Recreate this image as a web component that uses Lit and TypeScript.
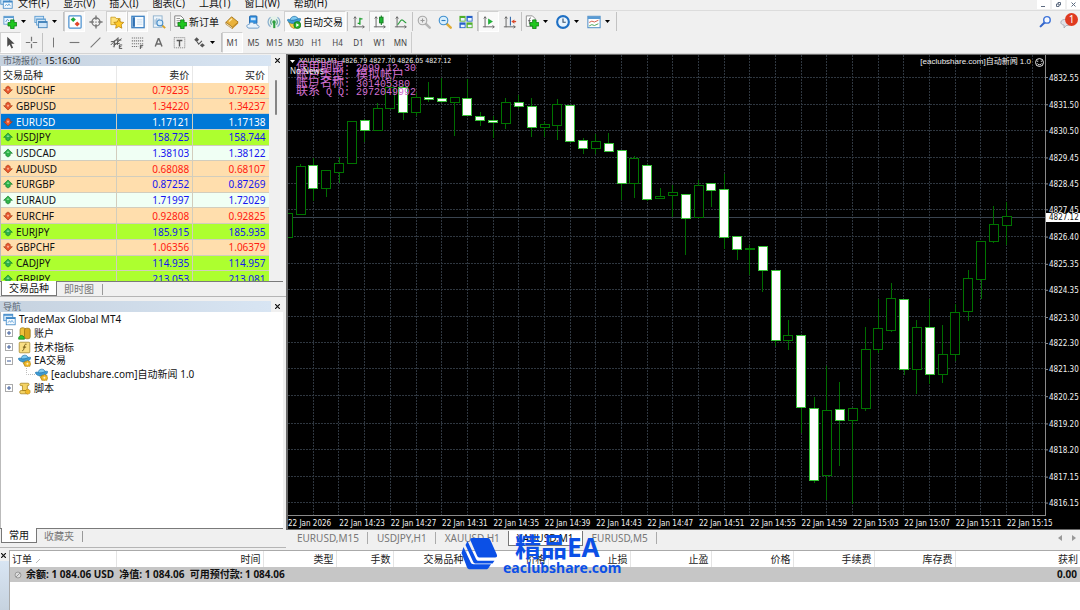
import { LitElement, html, svg, css, nothing } from "lit";
import { customElement } from "lit/decorators.js";
import { classMap } from "lit/directives/class-map.js";

/* ---------- icons (16 x 16 grid) ---------- */

const plus = svg`<path d="M9 7h4v3h3v4h-3v3h-4v-3H6v-4h3z" fill="#1fc61f" stroke="#0b7a12" stroke-width=".9" transform="translate(-.3 -1.4)"/>`;
const axes = svg`<path d="M3.5 2v12M1 13.5h13M2 4l1.5-2L5 4M12 12l2 1.5-2 1.5" fill="none" stroke="#666" stroke-width="1.1"/>`;
const hat = svg`
  <path d="M3.500 6.500c0-6 8.500-7 9.500-1z" fill="#7cc9f0" stroke="#1d6fa8" stroke-width=".8"/>
  <path d="M.4 5.500C2 3.800 4 6.800 7.500 6.200 11 5.600 13.500 3 15.600 4.200 15.500 8 11 9.800 7 9.800 3.500 9.700.8 8.200.4 5.500z" fill="#3d9bd3" stroke="#1d6fa8" stroke-width=".7"/>`;
const windows = svg`
  <rect x="1" y="1.500" width="11" height="8" fill="#d7ebfb" stroke="#3d86c6"/><path d="M1 2.500h11" stroke="#3d86c6" stroke-width="1.600"/>
  <rect x="4" y="5.500" width="11" height="9" fill="#f4faff" stroke="#3d86c6"/><path d="M4 6.500h11" stroke="#3d86c6" stroke-width="1.800"/>
  <path d="M6 12l2-2.500 1.500 2 1.500-2.500 2 3" fill="none" stroke="#5c9fd6"/>`;
const lens = (rim: string, glass: string, handle: string) => svg`
  <path d="M9.500 9.500l5 5" stroke="${handle}" stroke-width="2.800" stroke-linecap="round"/>
  <circle cx="6.300" cy="6.300" r="4.900" fill="${glass}" stroke="${rim}" stroke-width="1.300"/>`;

const ICONS: Record<string, unknown> = {
  app: windows,
  newChart: svg`<rect x="1" y="1.500" width="11" height="9" fill="#eaf5ff" stroke="#5b9bd0"/><path d="M1 2.500h11" stroke="#5b9bd0" stroke-width="1.800"/><path d="M3 8l2-3 2 2" fill="none" stroke="#4e8dc4"/>${plus}`,
  profiles: svg`<rect x="1" y="1.500" width="10" height="7" fill="#cfe5f8" stroke="#5b9bd0"/><rect x="3" y="4.500" width="10" height="7" fill="#e2f0fc" stroke="#5b9bd0"/><path d="M3 5.300h10" stroke="#5b9bd0"/><rect x="5" y="7.500" width="10" height="7" fill="#cfe5f8" stroke="#3d7fb8"/><path d="M5 8.300h10" stroke="#3d7fb8" stroke-width="1.500"/>`,
  quotes: svg`<rect x="1" y="1" width="14" height="14" rx="1" fill="#fff" stroke="#4a90cf" stroke-width="1.400"/><path d="M6 2.500l3 2.700-3 2.700-3-2.700z" fill="#1fa83a"/><path d="M10.500 7.500l3 2.800-3 2.700-3-2.700z" fill="#e2452a"/>`,
  target: svg`<circle cx="8" cy="8" r="4.600" fill="none" stroke="#777" stroke-width="1.500"/><path d="M8 .5v5M8 10.500v5M.5 8h5M10.500 8h5" stroke="#777" stroke-width="1.600"/><circle cx="8" cy="8" r="1" fill="#999"/>`,
  navigator: svg`<path d="M1 2.500h5l1 1.500h4.500V11H1z" fill="#ffe27a" stroke="#c79a1c" stroke-width=".9"/><path d="M10 4.500l1.800 3.500 3.900.5-2.900 2.700.7 3.900-3.500-1.900-3.500 1.900.7-3.900-2.900-2.700 3.900-.5z" fill="#ffc928" stroke="#b9830a" stroke-width=".9"/>`,
  dataWindow: svg`<rect x="1" y="1.500" width="14" height="13" fill="#f6fbff" stroke="#3f83c4" stroke-width="1.500"/><rect x="2" y="2.500" width="2.500" height="11" fill="#2d6fb3"/><path d="M7 5.500h6M7 8h6M7 10.500h6" stroke="#c3d8eb"/>`,
  tester: svg`<rect x="1.500" y="1" width="10" height="13" fill="#eef5fb" stroke="#8aaecb"/><path d="M3.500 11V5M5.500 11V3.500M8 7V4" stroke="#7fa6c8"/><path d="M11.500 11.500l3.500 3.500" stroke="#d9a227" stroke-width="2.200"/><circle cx="9" cy="9" r="3.400" fill="#d6ecfb" stroke="#4c8fc9" stroke-width="1.200"/>`,
  newOrder: svg`<path d="M2 1h7l3 3v9H2z" fill="#fdfdfd" stroke="#777"/><path d="M4 4h4M4 6.500h5M4 9h3" stroke="#888"/>${plus}`,
  editor: svg`<path d="M1 8.500L7.500 2 15 8l-6.500 6z" fill="#e9b23c" stroke="#9a6a10" stroke-width=".9"/><path d="M1 8.500l7.500 5.500v1.700L1 10.500z" fill="#fff4d5" stroke="#9a6a10" stroke-width=".7"/><path d="M8.500 14L15 8v1.800l-6.500 5.900z" fill="#c68a1a"/><path d="M4.500 7.500L8 4.300" stroke="#ffe7a6" stroke-width="1.500"/>`,
  cloud: svg`<rect x="4" y="1" width="8.500" height="9" rx="1" fill="#2f8fe0" stroke="#1b62a8"/><rect x="5.500" y="3" width="5.500" height="3" fill="#cfe8fb"/><path d="M3.500 15c-3.500-.3-3.300-4.500.2-4.300.6-2.900 4.300-2.900 5.300-.8 2-1 3.900.2 3.800 1.800 2.900.2 2.900 3.100.4 3.300z" fill="#e8f2fb" stroke="#5f92c4"/>`,
  signals: svg`<circle cx="8" cy="8" r="7" fill="#e6f2ea"/><path d="M4 13.500a6.800 6.800 0 010-11M12 2.500a6.800 6.800 0 010 11" fill="none" stroke="#8fb2cf" stroke-width="1.500"/><path d="M5.500 11a4 4 0 010-6M10.500 5a4 4 0 010 6" fill="none" stroke="#6aa9a0" stroke-width="1.500"/><circle cx="8" cy="8" r="2" fill="#2c9e3f"/><path d="M8.300 8v7" stroke="#2c9e3f" stroke-width="2.400"/>`,
  auto: svg`<path d="M2 8l12-.5-2.500 6L8 15.500 4.500 13.500z" fill="#f4cb45" stroke="#a9831c" stroke-width=".8"/>${hat}<circle cx="11.800" cy="11.500" r="4" fill="#2bb02b" stroke="#127312" stroke-width=".8"/><path d="M10.600 9.400v4.200l3.300-2.100z" fill="#fff"/>`,
  expert: svg`<path d="M5 8h7v3l-4 3z" fill="#f4cb45" stroke="#a9831c" stroke-width=".7"/>${hat}<path d="M11.800 7.600l1.100 1.600 1.900-.2.200 2 1 1-1 1.400-.3 1.800-1.900-.1-1.200 1-1.300-1-1.900.1-.2-1.900L7 12l1.200-1.300.2-1.900 1.900.1z" fill="#f0b92b" stroke="#a87808" stroke-width=".7"/><circle cx="11.600" cy="12" r="1.200" fill="#fff2c4"/>`,
  bars: svg`${axes}<path d="M9 3v8M9 4.500h3M6.500 9.500H9" stroke="#1b9e2c" stroke-width="1.500"/>`,
  candles: svg`${axes}<path d="M9.500 .5v11" stroke="#137a1f" stroke-width="1.200"/><rect x="7.500" y="2.500" width="4" height="6.500" fill="#20b534" stroke="#137a1f"/>`,
  line: svg`${axes}<path d="M4 11c2-1 3-5.500 5-5.500S11.500 8.500 14 9" fill="none" stroke="#2b9e3c" stroke-width="1.300"/>`,
  zoomIn: svg`${lens("#a9a9a9", "#ececec", "#b5b5b5")}<path d="M4 6.300h4.600M6.300 4v4.600" stroke="#999" stroke-width="1.200"/>`,
  zoomOut: svg`${lens("#3f8fcf", "#d9effc", "#e0ac35")}<path d="M4 6.300h4.600" stroke="#2d7fc0" stroke-width="1.300"/>`,
  tile: svg`<rect x=".5" y="1" width="7" height="6.500" fill="#4fae2a"/><rect x="8.500" y="1" width="7" height="6.500" fill="#2460c8"/><rect x=".5" y="8.500" width="7" height="6.500" fill="#2460c8"/><rect x="8.500" y="8.500" width="7" height="6.500" fill="#4fae2a"/><path d="M2 3.500h4.500v3H2zM10 3.500h4.500v3H10zM2 11h4.500v3H2zM10 11h4.500v3H10z" fill="#e9f4ff"/>`,
  scroll: svg`${axes}<path d="M7 4l5.500 3.500L7 11z" fill="#24b03a"/>`,
  shift: svg`${axes}<path d="M8.500 2v10" stroke="#3a6fae" stroke-width="1.300"/><path d="M9.500 7.500L13 5v5z" fill="#d9482b"/><path d="M12 7.500h3" stroke="#d9482b" stroke-width="1.500"/>`,
  indicators: svg`<path d="M1.500 1h7l3 3v9h-10z" fill="#fff" stroke="#888"/><path d="M6.800 3.500c-1.500-.5-1.800 1-1.800 2v5M3.500 6.500h3" fill="none" stroke="#555"/>${plus}`,
  clock: svg`<circle cx="8" cy="8" r="6.700" fill="#e9f4fd" stroke="#1e6fc4" stroke-width="2.400"/><path d="M8 4v4.300h3.200" fill="none" stroke="#35506e" stroke-width="1.300"/>`,
  template: svg`<rect x="1" y="1.500" width="14" height="13" fill="#fff" stroke="#5592c8" stroke-width="1.200"/><path d="M1 3.200h14" stroke="#5a9bd4" stroke-width="2.800"/><path d="M2.500 8.500l3-1.500 3 1 4.500-2" fill="none" stroke="#cf4a36"/><path d="M2.500 12.500l3-1.500 3 1 4.500-2" fill="none" stroke="#3a9b48"/>`,
  search: svg`<path d="M6.500 9.500L2 14" stroke="#3465c9" stroke-width="2.600" stroke-linecap="round"/><circle cx="9.800" cy="6" r="4" fill="#f4f8ff" stroke="#3f74d8" stroke-width="1.800"/>`,
  chat: svg`<path d="M1 9c0-5 13-5 13 0 0 3-3.500 4.200-6.500 4L5 16v-3.500C2 12 1 10.500 1 9z" fill="#e0e0e6" stroke="#a5a5ad"/>`,
  cursor: svg`<path d="M4 1l9 8.500H9l2.200 5-2 .9-2.200-5L4 13.200z" fill="#4a4a4a"/>`,
  cross: svg`<path d="M8 1v5.500M8 9.500V15M1 8h5.500M9.500 8H15" stroke="#777" stroke-width="1.500"/>`,
  vline: svg`<path d="M8 2v12" stroke="#777" stroke-width="1.300"/>`,
  hline: svg`<path d="M2 8h12" stroke="#777" stroke-width="1.400"/>`,
  trend: svg`<path d="M2 14L14 2" stroke="#777" stroke-width="1.300"/>`,
  channel: svg`<path d="M1 11l9-9M4 13l10-10M1 7l5-.5M4 10l8-1M7 5l7 0M5 14l1-9M9 11l1-9" stroke="#555" stroke-width="1.200"/><path d="M15 11h-3.500v4.500H15M11.500 13.200H14" fill="none" stroke="#444" stroke-width="1.100"/>`,
  fibo: svg`<path d="M1 2.500h14M1 6h14M1 9.500h14M1 13h8" stroke="#777" stroke-width="1.300" stroke-dasharray="1.500 1"/><path d="M15 11.500h-3.500V16M11.500 13.500H14" fill="none" stroke="#444" stroke-width="1.100"/>`,
  textA: svg`<path d="M4 13L7.700 3.500h.8L12.300 13M5.300 9.800h5.600" fill="none" stroke="#6a6a6a" stroke-width="1.800"/>`,
  label: svg`<rect x="1.500" y="2" width="13" height="12.500" fill="none" stroke="#777" stroke-dasharray="1.500 1"/><path d="M4.500 5.500h7M8 5.500V13" stroke="#555" stroke-width="1.700"/>`,
  arrows: svg`<path d="M4.500 1.500l3 3-3 3-3-3z" fill="#555"/><path d="M5 7l2 3 4-4" fill="none" stroke="#555" stroke-width="1.300"/><path d="M11.500 9l3 2.500-3 2.500-3-2.500z" fill="#555"/>`,
  account: svg`<rect x="2.500" y="1" width="6.500" height="11" rx="2.500" fill="#f0c23c" stroke="#a07a12" stroke-width=".9"/><rect x="8" y="1.500" width="7" height="13" rx="2.500" fill="#dba520" stroke="#94700e" stroke-width=".9"/><path d="M.8 15c-.8-6 7.500-6 7.200 0z" fill="#31c431" stroke="#128012" stroke-width=".9"/>`,
  func: svg`<rect x="1.500" y="1.500" width="13" height="13" rx="1" fill="#f9df85" stroke="#a88a33"/><path d="M10.500 4c-2-.6-2.400 1-2.700 3S7 12 5.300 12M6 7.500h4" fill="none" stroke="#6e5410" stroke-width="1.200"/>`,
  script: svg`<path d="M3.500 1.500h9c1.500 0 1.500 3 0 3h-1v6H5.500v-6h-2c-1.500 0-1.500-3 0-3zM3.500 10.500h7v4h-7c-1.800 0-1.800-4 0-4z" fill="#f4d365" stroke="#a37f1a" stroke-width=".9"/><circle cx="12" cy="12" r="3" fill="#f0b92b" stroke="#a87808" stroke-dasharray="1.200 .8"/>`,
  up: svg`<path d="M8 1.500L15 8.500h-3.500V12L8 14.500 4.500 12V8.500H1z" fill="#2fb54a" stroke="#14762a" stroke-linejoin="round"/><path d="M8 4.500l2.500 3.500h-5z" fill="#7fdc92"/>`,
  down: svg`<path d="M8 14.500L1 7.500h3.500V4L8 1.500 11.500 4v3.500H15z" fill="#e6532c" stroke="#a5380f" stroke-linejoin="round"/><path d="M8 10.500L5.500 6h5z" fill="#ffab8a"/>`,
};

const icon = (name: string) =>
  html`<svg class="icon" viewBox="0 0 16 16" aria-hidden="true">${ICONS[name]}</svg>`;
const caret = html`<svg class="caret" viewBox="0 0 5 3" aria-hidden="true"><path d="M0 0h5L2.500 3z" /></svg>`;

/* ---------- data ---------- */

type Tool = { icon?: string; name?: string; text?: string; menu?: boolean; on?: boolean; sep?: boolean };

const MENUS = ["文件(F)", "显示(V)", "插入(I)", "图表(C)", "工具(T)", "窗口(W)", "帮助(H)"];

const STANDARD: Tool[] = [
  { icon: "newChart", name: "新图表", menu: true },
  { icon: "profiles", name: "配置文件", menu: true },
  { sep: true },
  { icon: "quotes", name: "市场报价", on: true },
  { icon: "target", name: "十字线" },
  { icon: "navigator", name: "导航", on: true },
  { icon: "dataWindow", name: "终端", on: true },
  { icon: "tester", name: "策略测试" },
  { sep: true },
  { icon: "newOrder", text: "新订单" },
  { icon: "editor", name: "编辑器" },
  { icon: "cloud", name: "云" },
  { icon: "signals", name: "信号" },
  { icon: "auto", text: "自动交易", on: true },
  { sep: true },
  { icon: "bars", name: "柱状图" },
  { icon: "candles", name: "阴阳烛", on: true },
  { icon: "line", name: "折线图" },
  { sep: true },
  { icon: "zoomIn", name: "放大" },
  { icon: "zoomOut", name: "缩小" },
  { icon: "tile", name: "平铺窗口" },
  { sep: true },
  { icon: "scroll", name: "自动滚动", on: true },
  { icon: "shift", name: "图表平移" },
  { sep: true },
  { icon: "indicators", name: "指标", menu: true },
  { icon: "clock", name: "周期", menu: true },
  { icon: "template", name: "模板", menu: true },
  { sep: true },
];

const DRAWING: Tool[] = [
  { icon: "cursor", name: "光标", on: true },
  { icon: "cross", name: "十字准线" },
  { sep: true },
  { icon: "vline", name: "垂直线" },
  { icon: "hline", name: "水平线" },
  { icon: "trend", name: "趋势线" },
  { icon: "channel", name: "通道" },
  { icon: "fibo", name: "斐波那契" },
  { icon: "textA", name: "文字" },
  { icon: "label", name: "标签" },
  { icon: "arrows", name: "箭头", menu: true },
];

const PERIODS = ["M1", "M5", "M15", "M30", "H1", "H4", "D1", "W1", "MN"];

type Quote = [symbol: string, bid: string, ask: string, up: boolean, tone: string];
const QUOTES: Quote[] = [
  ["USDCHF", "0.79235", "0.79252", false, "peach"],
  ["GBPUSD", "1.34220", "1.34237", false, "peach"],
  ["EURUSD", "1.17121", "1.17138", false, "chosen"],
  ["USDJPY", "158.725", "158.744", true, "lime"],
  ["USDCAD", "1.38103", "1.38122", true, "mint"],
  ["AUDUSD", "0.68088", "0.68107", false, "peach"],
  ["EURGBP", "0.87252", "0.87269", true, "peach"],
  ["EURAUD", "1.71997", "1.72029", true, "mint"],
  ["EURCHF", "0.92808", "0.92825", false, "peach"],
  ["EURJPY", "185.915", "185.935", true, "lime"],
  ["GBPCHF", "1.06356", "1.06379", false, "peach"],
  ["CADJPY", "114.935", "114.957", true, "lime"],
  ["GBPJPY", "213.053", "213.081", true, "lime"],
];

/* Plot space: 757 wide, 461 high. Candle: [filled, high, body top, body bottom, low]. */
const PLOT_W = 757;
const PLOT_H = 461;
const STEP = 12.84;
type Candle = [number, number, number, number, number];
const CANDLES: Candle[] = [
  [0, 157, 159, 183, 183], [0, 109, 112, 160, 160], [1, 103, 111, 134, 146], [0, 116, 116, 134, 142],
  [0, 102, 109, 118, 128], [0, 67, 67, 109, 109], [1, 64, 66, 76, 87], [0, 48, 54, 76, 76],
  [0, 23, 33, 54, 54], [1, 29, 33, 58, 65], [0, 38, 43, 58, 61], [1, 27, 43, 45, 47],
  [1, 23, 44, 47, 48], [0, 43, 43, 48, 81], [1, 24, 44, 61, 61], [1, 57, 62, 66, 71],
  [1, 61, 66, 68, 83], [0, 43, 48, 69, 74], [1, 40, 48, 52, 54], [1, 43, 52, 73, 82],
  [0, 67, 70, 73, 82], [0, 44, 50, 71, 85], [1, 51, 51, 87, 88], [1, 83, 86, 94, 99],
  [0, 79, 87, 94, 99], [1, 78, 89, 97, 97], [1, 96, 96, 129, 145], [0, 101, 104, 129, 143],
  [1, 109, 111, 145, 146], [0, 133, 142, 144, 144], [0, 130, 138, 141, 162], [1, 139, 140, 164, 200],
  [0, 125, 131, 163, 163], [1, 128, 129, 136, 152], [1, 119, 135, 183, 194], [1, 182, 182, 195, 205],
  [0, 190, 194, 195, 220], [1, 191, 192, 216, 238], [1, 215, 216, 286, 292], [0, 266, 281, 286, 296],
  [1, 281, 281, 353, 379], [1, 343, 354, 426, 429], [0, 312, 356, 421, 446], [1, 328, 355, 366, 412],
  [0, 354, 354, 366, 450], [0, 273, 295, 354, 357], [0, 245, 274, 295, 299], [0, 228, 244, 276, 278],
  [1, 245, 245, 315, 321], [0, 266, 273, 315, 340], [1, 245, 273, 320, 330], [0, 271, 300, 320, 329],
  [0, 250, 258, 300, 307], [0, 215, 224, 257, 267], [0, 187, 187, 225, 245], [0, 151, 170, 187, 188],
  [0, 147, 162, 171, 190],
];

const TOP_PRICE = 4832.55;
const PRICES = [
  "4832.55", "4831.50", "4830.50", "4829.45", "4828.45", "4827.45", "4826.40", "4825.35", "4824.35",
  "4823.30", "4822.30", "4821.30", "4820.25", "4819.20", "4818.20", "4817.15", "4816.15",
];
const TIMES = [
  "22 Jan 2026", "22 Jan 14:23", "22 Jan 14:27", "22 Jan 14:31", "22 Jan 14:35", "22 Jan 14:39",
  "22 Jan 14:43", "22 Jan 14:47", "22 Jan 14:51", "22 Jan 14:55", "22 Jan 14:59", "22 Jan 15:03",
  "22 Jan 15:07", "22 Jan 15:11", "22 Jan 15:15",
];

const px = (v: number) => `${((v / PLOT_W) * 100).toFixed(3)}%`;
const py = (v: number) => `${((v / PLOT_H) * 100).toFixed(3)}%`;
const priceY = (p: number) => py(22.5 + (TOP_PRICE - p) * 25.95);

/* ---------- shared styles ---------- */

const base = css`
  * { box-sizing: border-box; }
  button {
    font: inherit; color: inherit; background: none; border: 0; padding: 0; margin: 0;
    display: inline-flex; align-items: center; justify-content: center; white-space: nowrap;
  }
  .icon { width: 14px; height: 14px; flex: none; display: block; }
  .caret { width: 5px; height: 3px; flex: none; fill: #000; }
  .caption {
    display: flex; align-items: center; height: 11px; padding-left: 3px; font-size: 9px; line-height: 11px;
    color: #5b6570; background: linear-gradient(90deg, #c6d2df, #d8e5f3);
    border-right: 15px solid #f0f0f0;
  }
  .caption b { font-weight: 400; color: #111; margin-left: 3px; }
  .caption button { margin: 0 -11px 0 auto; width: 9px; color: #111; }
  .cross { width: 5px; height: 5px; stroke: #111; stroke-width: 1.2; }
  .tabs { display: flex; height: 15px; border-top: 1px solid #7a7a7a; margin-right: 3px; padding-left: 1px; }
  .tabs button { padding: 0 7px; color: #777; border-right: 1px solid transparent; line-height: 14px; }
  .tabs button.active { color: #111; background: #fff; border: 1px solid #777; border-top: 0; margin-top: -1px; height: 15px; }
  .tabs i { width: 1px; height: 11px; margin-top: 2px; background: #999; }
`;
const cross = html`<svg class="cross" viewBox="0 0 5 5" aria-hidden="true"><path d="M0 0l5 5M5 0L0 5" /></svg>`;

/* ---------- market watch ---------- */

@customElement("market-watch")
export class MarketWatch extends LitElement {
  static styles = [base, css`
    :host { display: flex; flex-direction: column; height: 243px; padding-top: 1px; border-bottom: 1px solid #b5b5b5; }
    .body { flex: 1; min-height: 0; display: flex; overflow: hidden; border-left: 1px solid #bbb; }
    .track { width: 17px; padding: 14px 9px 0 6px; }
    .thumb { width: 2px; height: 35px; background: #858585; border-radius: 1px; }
    table { flex: 1; height: 221px; border-collapse: collapse; table-layout: fixed; line-height: 14px; }
    th { height: 17px; font-weight: 400; background: #fff; color: #222; text-align: right; padding: 0 3px 0 2px; border-right: 1px solid #e8e8e8; }
    th:first-child { text-align: left; }
    td { padding: 0 3px 0 2px; text-align: right; border-right: 1px solid #d2cdbd; border-bottom: 1px solid #d2cdbd; }
    td:last-child { border-right: 0; }
    .sym { width: 43%; }
    .name { display: flex; align-items: center; gap: 3px; color: #111; }
    .name .icon { width: 10px; height: 10px; }
    .peach { background: #ffdead; }
    .lime { background: #adff2f; }
    .mint { background: #f0fff4; }
    .chosen { background: #0078d7; }
    .rise { color: #1414f0; }
    .fall { color: #ff1a10; }
    .chosen td, .chosen .name { color: #fff; }
  `];
  render() {
    return html`
      <div class="caption">市场报价: <b>15:16:00</b><button aria-label="关闭">${cross}</button></div>
      <div class="body">
        <table>
          <thead><tr><th class="sym">交易品种</th><th>卖价</th><th>买价</th></tr></thead>
          <tbody>
            ${QUOTES.map(([s, bid, ask, up, tone]) => html`
              <tr class=${classMap({ [tone]: true, rise: up, fall: !up })}>
                <td><span class="name">${icon(up ? "up" : "down")}${s}</span></td>
                <td>${bid}</td><td>${ask}</td>
              </tr>`)}
          </tbody>
        </table>
        <div class="track"><div class="thumb"></div></div>
      </div>
      <div class="tabs"><button class="active">交易品种</button><button>即时图</button><i></i></div>`;
  }
}

/* ---------- navigator ---------- */

@customElement("nav-tree")
export class NavTree extends LitElement {
  static styles = [base, css`
    :host { display: flex; flex-direction: column; flex: 1; min-height: 0; padding: 4px 0; border-bottom: 1px solid #b5b5b5; }
    .body { flex: 1; background: #fff; border-left: 1px solid #bbb; margin-right: 3px; padding: 1px 2px; color: #111; }
    ul { list-style: none; margin: 0; padding: 0; display: grid; grid-auto-rows: minmax(0, 1fr); height: 82px; }
    li { display: flex; align-items: center; gap: 3px; line-height: 13px; white-space: nowrap; }
    li .icon { width: 13px; height: 13px; }
    li.leaf { padding-left: 18px; }
    .fold { width: 8px; height: 8px; margin: 0 2px; fill: #fff; stroke: #aaa; flex: none; }
    .fold path { stroke: #3b5a9a; }
    .twig { width: 14px; height: 13px; fill: none; stroke: #bbb; stroke-dasharray: 1 1; margin-right: -3px; }
  `];
  private fold(open = false) {
    return html`<svg class="fold" viewBox="0 0 8 8" aria-hidden="true"><rect x=".5" y=".5" width="7" height="7" /><path d=${open ? "M2 4h4" : "M2 4h4M4 2v4"} /></svg>`;
  }
  render() {
    return html`
      <div class="caption">导航<button aria-label="关闭">${cross}</button></div>
      <div class="body">
        <ul>
          <li class="root">${icon("app")}TradeMax Global MT4</li>
          <li>${this.fold()}${icon("account")}账户</li>
          <li>${this.fold()}${icon("func")}技术指标</li>
          <li>${this.fold(true)}${icon("expert")}EA交易</li>
          <li class="leaf"><svg class="twig" viewBox="0 0 14 13" aria-hidden="true"><path d="M5.500 0v6.500h9" /></svg>${icon("expert")}[eaclubshare.com]自动新闻 1.0</li>
          <li>${this.fold()}${icon("script")}脚本</li>
        </ul>
      </div>
      <div class="tabs"><button class="active">常用</button><button>收藏夹</button><i></i></div>`;
  }
}

/* ---------- chart ---------- */

@customElement("price-chart")
export class PriceChart extends LitElement {
  static styles = css`
    :host {
      flex: 1; min-height: 0; display: grid; grid-template: minmax(0, 1fr) 13px / minmax(0, 1fr) 34px; position: relative;
      background: #000; border: solid #6a6a6a; border-width: 1px 0 1px 2px; overflow: hidden;
      font: 7px/10px "DejaVu Sans Condensed", "DejaVu Sans", "Noto Sans CJK SC", sans-serif; color: #eee;
    }
    svg { display: block; width: 100%; height: 100%; }
    .plot { box-sizing: border-box; border-right: 1px solid #8a8a8a; border-bottom: 1px solid #8a8a8a; shape-rendering: crispEdges; }
    .times { grid-column: 1 / -1; overflow: visible; }
    text { fill: #f2f2f2; font-size: 8px; }
    .grid { stroke: #2f3740; stroke-dasharray: 2 1; }
    .now { stroke: #3a4450; }
    .tick { stroke: #8a8a8a; }
    .hollow { fill: #000; stroke: #007400; }
    .solid { fill: #fff; stroke: #35c035; }
    .wick { stroke: #006c00; }
    .tag { fill: #fff; }
    .tagged { fill: #111; }
    .head, .notes, .news, .expert { position: absolute; white-space: pre; }
    .head { left: 2px; top: 1px; display: flex; align-items: center; gap: 4px; }
    .arrow { width: 5px; height: 3px; fill: #fff; }
    .news { left: 2px; top: 10px; font: 8px/12px "Noto Sans", sans-serif; }
    .expert { right: 36px; top: 1px; display: flex; align-items: center; gap: 4px; font: 8px/12px "Liberation Sans", "Noto Sans CJK SC", sans-serif; }
    .smile { width: 9px; height: 9px; fill: none; stroke: #fff; }
    .notes {
      left: 8px; top: 7px; color: #d070d0; line-height: 8px;
      font-family: "Noto Sans CJK SC", sans-serif; font-size: 12px; display: grid; grid-auto-rows: 8px;
    }
    .notes b { font: 10px/8px "Liberation Mono", monospace; }
  `;
  private plot() {
    const cols = Array.from({ length: 29 }, (_, i) => px(25.3 + i * 25.68));
    return html`<svg class="plot" role="img" aria-label="XAUUSD M1">
      ${cols.map((x) => svg`<line class="grid" x1=${x} x2=${x} y1="0" y2="100%" />`)}
      ${PRICES.map((p) => svg`<line class="grid" x1="0" x2="100%" y1=${priceY(+p)} y2=${priceY(+p)} />`)}
      <line class="now" x1="0" x2="100%" y1=${py(162.5)} y2=${py(162.5)} />
      ${CANDLES.map(([filled, hi, top, bottom, lo], i) => {
        const x = px(i * STEP - 0.3);
        return svg`
          <line class="wick" x1=${x} x2=${x} y1=${py(hi)} y2=${py(lo)} />
          <rect class=${filled ? "solid" : "hollow"} x=${x} y=${py(top)} width="9" height=${py(Math.max(bottom - top, 1))} transform="translate(-4.500 0)" />`;
      })}
    </svg>`;
  }
  render() {
    return html`
      ${this.plot()}
      <svg class="prices">
        ${PRICES.map((p) => svg`<line class="tick" x1="0" x2="2" y1=${priceY(+p)} y2=${priceY(+p)} /><text x="3" y=${priceY(+p)} dy="3">${p}</text>`)}
        <rect class="tag" x="0" y=${py(158)} width="34" height="9" />
        <text class="tagged" x="3" y=${py(162.5)} dy="3">4827.12</text>
      </svg>
      <svg class="times">
        ${TIMES.map((t, i) => svg`<text x=${`${((i * 51.36 * 100) / 792).toFixed(3)}%`} y="10">${t}</text>`)}
      </svg>
      <div class="head"><svg class="arrow" viewBox="0 0 5 3" aria-hidden="true"><path d="M0 0h5L2.500 3z" /></svg><span>XAUUSD,M1  4826.79 4827.70 4826.05 4827.12</span></div>
      <div class="notes"><span>使用期限<b>: 2099.12.30</b></span><span>账户类型<b>: </b>模拟帐户</span><span>账户名称<b>: 301405380</b></span><span>联系<b> Q Q: 2972049992</b></span></div>
      <div class="news">No News</div>
      <div class="expert">[eaclubshare.com]自动新闻 1.0<svg class="smile" viewBox="0 0 10 10" aria-hidden="true"><circle cx="5" cy="5" r="4.400" /><path d="M3 3v1.300M7 3v1.300M2.500 6c1 2 4 2 5 0" /></svg></div>`;
  }
}

/* ---------- terminal ---------- */

@customElement("trade-terminal")
export class TradeTerminal extends LitElement {
  static styles = [base, css`
    :host { display: flex; height: 62px; padding-top: 2px; background: #f0f0f0; }
    .rail { width: 9px; display: flex; flex-direction: column; flex: none; }
    .rail button { height: 11px; width: 6px; }
    .rail::after { content: ""; flex: 1; background: linear-gradient(#d8e5f3, #c6d2df); }
    .sheet { flex: 1; background: #fff; border: solid #aaa; border-width: 1px 0 0 1px; }
    table { width: 100%; border-collapse: collapse; table-layout: fixed; line-height: 16px; }
    th { font-weight: 400; text-align: right; padding: 0 2px; border-right: 1px solid #e4e4e4; height: 16px; color: #222; white-space: nowrap; }
    th:first-child { text-align: left; }
    th:last-child { border: 0; }
    td { background: #c6c6c6; height: 15px; padding: 0 3px 0 4px; font-weight: 700; line-height: 15px; color: #111; white-space: pre; }
    td:last-child { text-align: right; }
    .balance { display: flex; align-items: center; gap: 4px; }
    .dot { width: 8px; height: 8px; fill: #ddd; stroke: #999; }
    .sort { width: 4px; height: 4px; margin-left: 4px; stroke: #bbb; }
    .c106 { width: 106px; } .c147 { width: 147px; } .c73 { width: 73px; }
    .c57 { width: 57px; } .c82 { width: 82px; } .c81 { width: 81px; }
  `];
  render() {
    const cols: [string, string][] = [
      ["时间", "c147"], ["类型", "c73"], ["手数", "c57"], ["交易品种", "c73"], ["价格", "c82"],
      ["止损", "c82"], ["止盈", "c81"], ["价格", "c82"], ["手续费", "c81"], ["库存费", "c81"], ["获利", ""],
    ];
    return html`
      <div class="rail"><button aria-label="关闭">${cross}</button></div>
      <div class="sheet">
        <table>
          <thead><tr>
            <th class="c106">订单<svg class="sort" viewBox="0 0 4 4" aria-hidden="true"><path d="M0 4l4-4" /></svg></th>
            ${cols.map(([t, c]) => html`<th class=${c || nothing}>${t}</th>`)}
          </tr></thead>
          <tbody><tr>
            <td colspan="11"><span class="balance"><svg class="dot" viewBox="0 0 8 8" aria-hidden="true"><circle cx="4" cy="4" r="3" /><path d="M2 6l4-4" /></svg>余额: 1 084.06 USD  净值: 1 084.06  可用预付款: 1 084.06</span></td>
            <td>0.00</td>
          </tr></tbody>
        </table>
      </div>`;
  }
}

/* ---------- shell ---------- */

@customElement("app-root")
export class AppRoot extends LitElement {
  static styles = [base, css`
    :host {
      display: flex; flex-direction: column; height: 100vh; overflow: hidden; position: relative;
      background: #f0f0f0; color: #111; font: 10px/14px "Noto Sans", "Noto Sans CJK SC", sans-serif;
    }
    .menubar { display: flex; height: 11px; border-bottom: 1px solid #dcdcdc; overflow: hidden; line-height: 7px; align-items: flex-start; }
    .menubar .icon { width: 13px; margin: -4px 5px 0 0; }
    .menubar nav { display: flex; gap: 14px; height: 7px; flex: 1; }
    .win { display: flex; gap: 2px; }
    .win button { width: 13px; height: 9px; background: #fff; }
    .win svg { width: 5px; height: 5px; fill: none; stroke: #5d6b80; }
    .bar { display: flex; height: 21px; align-items: stretch; }
    .bar button { width: 21px; gap: 3px; }
    .bar button.menu { width: 31px; gap: 4px; padding-right: 3px; }
    .bar button.text { width: auto; padding: 0 2px; gap: 2px; }
    .bar button.on { background: #f9f9f9; border: 1px solid #d0d0d0; border-right-color: #fff; border-bottom-color: #fff; }
    .bar .sep { width: 1px; margin: 1px 0 1px 1px; background: #c2c2c2; }
    .draw .icon { width: 13px; height: 13px; }
    .draw .sep { margin-left: 0; }
    .periods { display: flex; border-right: 1px solid #ccc; font-size: 8px; color: #444; }
    .alerts { display: flex; margin-left: auto; align-items: center; }
    .alerts .icon { width: 13px; height: 13px; }
    .alerts button { height: 19px; }
    .alerts .bell { position: relative; width: 24px; justify-content: flex-start; padding-left: 4px; }
    .badge {
      position: absolute; right: 2px; top: 1px; width: 13px; height: 13px; border-radius: 50%;
      background: #df3a20; color: #fff; font-size: 10px; line-height: 13px; text-align: center;
    }
    .work { flex: 1; min-height: 0; display: grid; grid-template-columns: 286px minmax(0, 1fr); border-top: 1px solid #d4d4d4; }
    .side, .main { display: flex; flex-direction: column; min-height: 0; }
    .charts { display: flex; align-items: center; height: 18px; padding: 0 0 2px 2px; color: #777; }
    .charts button { padding: 0 8px 0 9px; height: 15px; }
    .charts button.active { background: #fff; color: #111; border: 1px solid #777; border-top: 0; padding: 0 8px; }
    .charts i { width: 1px; height: 12px; background: #aaa; }
    .charts .pager { margin-left: auto; display: flex; gap: 10px; padding-right: 4px; }
    .pager svg { width: 4px; height: 6px; fill: #999; }
    .brand { position: absolute; left: 461px; bottom: 35px; display: flex; align-items: center; gap: 5px; color: #0b50e6; font-weight: 700; }
    .brand svg { width: 37px; height: 33px; flex: none; margin-top: -2px; }
    .brand p { margin: 0; display: grid; white-space: nowrap; }
    .brand .cn { font-size: 26px; line-height: 28px; padding-left: 12px; }
    .brand .url { font-size: 14px; line-height: 14px; }
  `];
  private tool(t: Tool) {
    if (t.sep) return html`<span class="sep"></span>`;
    return html`<button class=${classMap({ on: !!t.on, menu: !!t.menu, text: !!t.text })} aria-label=${t.name ?? nothing}>
      ${icon(t.icon!)}${t.text ?? nothing}${t.menu ? caret : nothing}
    </button>`;
  }
  render() {
    return html`
      <header class="menubar">
        ${icon("app")}
        <nav>${MENUS.map((m) => html`<button>${m}</button>`)}</nav>
        <div class="win">
          <button aria-label="最小化"><svg viewBox="0 0 5 5"><path d="M0 4.500h4" /></svg></button>
          <button aria-label="还原"><svg viewBox="0 0 5 5"><path d="M.5 2h2.500v2.500H.5zM2 2V.5h2.500V3H3" /></svg></button>
          <button aria-label="关闭"><svg viewBox="0 0 5 5"><path d="M.5 .5l4 4M4.500 .5l-4 4" /></svg></button>
        </div>
      </header>
      <div class="bar">
        ${STANDARD.map((t) => this.tool(t))}
        <div class="alerts">
          <button aria-label="搜索">${icon("search")}</button>
          <button class="bell" aria-label="通知">${icon("chat")}<span class="badge">1</span></button>
        </div>
      </div>
      <div class="bar draw">
        ${DRAWING.map((t) => this.tool(t))}
        <span class="sep"></span>
        <div class="periods">${PERIODS.map((p, i) => html`<button class=${classMap({ on: i === 0 })}>${p}</button>`)}</div>
      </div>
      <div class="work">
        <div class="side"><market-watch></market-watch><nav-tree></nav-tree></div>
        <div class="main">
          <price-chart></price-chart>
          <div class="charts">
            <button>EURUSD,M15</button><i></i><button>USDJPY,H1</button><i></i><button>XAUUSD,H1</button>
            <button class="active">XAUUSD,M1</button><button>EURUSD,M5</button><i></i>
            <span class="pager">
              <svg viewBox="0 0 4 6" aria-hidden="true"><path d="M4 0v6L0 3z" /></svg>
              <svg viewBox="0 0 4 6" aria-hidden="true"><path d="M0 0v6l4-3z" /></svg>
            </span>
          </div>
        </div>
      </div>
      <trade-terminal></trade-terminal>
      <div class="brand">
        <svg viewBox="0 0 37 33" aria-hidden="true">
          <path d="M11 1h15.500c1.500 0 2.300.7 2.800 2l6.500 14.500c.7 1.800 0 3-1.800 3H19c-1.600 0-2.400-.6-3-2L9.500 3.500C9 2 9.500 1 11 1z" fill="#0b50e6" />
          <path d="M6.500 4l8.500 18c.6 1.300 1.500 1.800 3 1.800h15.500l-2 2.700H15c-1.500 0-2.500-.6-3-2L4.500 8z" fill="#0b50e6" />
          <path d="M2.500 10l7 15c.7 1.500 1.600 2.200 3.200 2.200H30L27.500 31c-.6 1-1.300 1.300-2.300 1.300H9c-1.500 0-2.500-.6-3-2L.5 16z" fill="#0b50e6" />
        </svg>
        <p><span class="cn">精品EA</span><span class="url">eaclubshare.com</span></p>
      </div>`;
  }
}
